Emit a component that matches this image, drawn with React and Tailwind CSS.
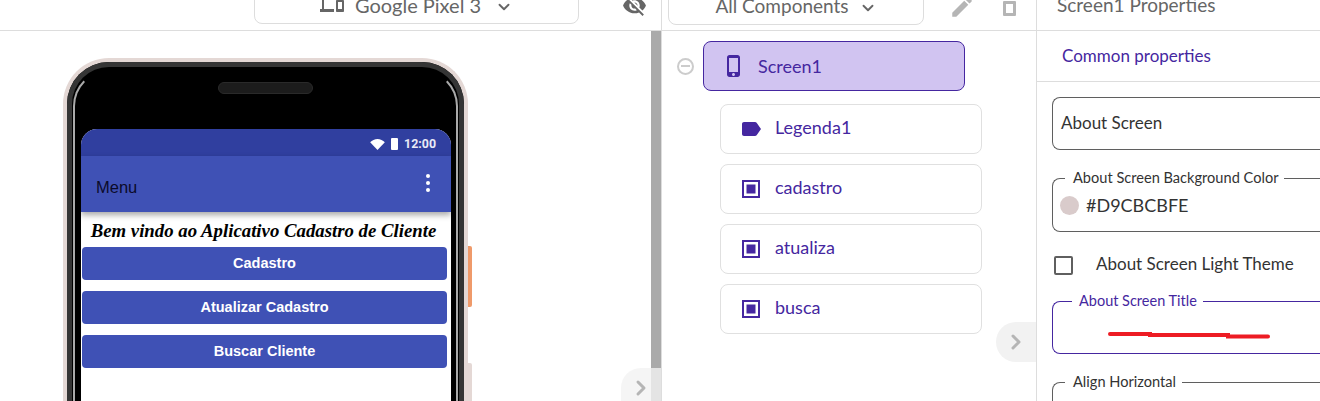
import { ChevronDown, ChevronRight } from "lucide-react";

const font = "font-['Lato','Noto_Sans',sans-serif]";

function Icon({ d, className }) {
  return (
    <svg viewBox="0 0 24 24" fill="currentColor" className={className}>
      <path d={d} />
    </svg>
  );
}

const icons = {
  devices:
    "M4 6h18V4H4c-1.1 0-2 .9-2 2v11H0v3h14v-3H4V6zm19 2h-6c-.55 0-1 .45-1 1v10c0 .55.45 1 1 1h6c.55 0 1-.45 1-1V9c0-.55-.45-1-1-1zm-1 9h-4v-7h4v7z",
  eyeOff:
    "M12 7c2.76 0 5 2.24 5 5 0 .65-.13 1.26-.36 1.83l2.92 2.92c1.51-1.26 2.7-2.89 3.43-4.75-1.73-4.39-6-7.5-11-7.5-1.4 0-2.74.25-3.98.7l2.16 2.16C10.74 7.13 11.35 7 12 7zM2 4.27l2.28 2.28.46.46C3.08 8.3 1.78 10.02 1 12c1.73 4.39 6 7.5 11 7.5 1.55 0 3.03-.3 4.38-.84l.42.42L19.73 22 21 20.73 3.27 3 2 4.27zM7.53 9.8l1.55 1.55c-.05.21-.08.43-.08.65 0 1.66 1.34 3 3 3 .22 0 .44-.03.65-.08l1.55 1.55c-.67.33-1.41.53-2.2.53-2.76 0-5-2.24-5-5 0-.79.2-1.53.53-2.2zm4.31-.78l3.15 3.15.02-.16c0-1.66-1.34-3-3-3l-.17.01z",
  pencil:
    "M3 17.25V21h3.75L17.81 9.94l-3.75-3.75L3 17.25zM20.71 7.04c.39-.39.39-1.02 0-1.41l-2.34-2.34c-.39-.39-1.02-.39-1.41 0l-1.83 1.83 3.75 3.75 1.83-1.83z",
  phone:
    "M15.5 1h-8C6.12 1 5 2.12 5 3.5v17C5 21.88 6.12 23 7.5 23h8c1.38 0 2.5-1.12 2.5-2.5v-17C18 2.12 16.88 1 15.5 1zm-4 21c-.83 0-1.5-.67-1.5-1.5s.67-1.5 1.5-1.5 1.5.67 1.5 1.5-.67 1.5-1.5 1.5zm4.5-4H7V4h9v14z",
  label:
    "M17.63 5.84C17.27 5.33 16.67 5 16 5L5 5.01C3.9 5.01 3 5.9 3 7v10c0 1.1.9 1.99 2 1.99L16 19c.67 0 1.27-.33 1.63-.84L22 12l-4.37-6.16z",
  button: "M3 3h18v18H3V3zm2 2v14h14V5H5zm2.5 2.5h9v9h-9v-9z",
};

function TreeRow({ icon, name, selected }) {
  return (
    <div
      className={
        selected
          ? "flex h-[50px] w-[262px] items-center rounded-lg border border-[#4527a0] bg-[#d1c4f1] pl-[18px] text-[#4527a0]"
          : "flex h-[50px] w-[262px] items-center rounded-lg border border-[#e0e0e0] bg-white pl-[18px] text-[#4527a0]"
      }
    >
      <Icon d={icon} className="h-6 w-6 shrink-0" />
      <span className={selected ? "ml-[12px] text-[18px] leading-none" : "mb-[5px] ml-[12px] text-[18px] leading-none"}>
        {name}
      </span>
    </div>
  );
}

function Field({ label, children, purple, height }) {
  return (
    <fieldset
      className={
        purple
          ? "m-0 w-[300px] rounded-l-lg border border-r-0 border-[#4527a0] pl-[19px]"
          : "m-0 w-[300px] rounded-l-lg border border-r-0 border-[#5f5f5f] pl-[12px]"
      }
      style={{ height }}
    >
      <legend
        className={
          purple
            ? "pl-[7px] pr-[6px] text-[14.5px] leading-[9px] text-[#4527a0]"
            : "pl-[8px] pr-[6px] text-[14.6px] leading-[9px] text-[#333333]"
        }
      >
        <span className="block -translate-y-px">{label}</span>
      </legend>
      {children}
    </fieldset>
  );
}

function Phone() {
  return (
    <div className="ml-[63px] mt-[27px] h-[400px] w-[405px] rounded-t-[46px] border-x-4 border-t-4 border-[#e4d8d5] bg-black">
      <div className="h-[400px] rounded-t-[42px] border-x-[5px] border-t-[5px] border-[#353535] px-[1px] pt-[3px]">
        <div className="h-[400px] rounded-t-[36px] border-x-2 border-t-2 border-x-[#aaaaaa] border-t-transparent pl-[6px] pr-[5px] pt-[10px]">
          <div className="mx-auto h-[12px] w-[95px] translate-x-[-1px] rounded-full border border-[#2a2a2a] bg-[#1c1c1c]" />
          <div className="mt-[35px] h-[300px] overflow-hidden rounded-t-[16px] bg-white">
            <div className="flex h-[27px] items-center justify-end bg-[#303f9f] pr-[15px] pt-[3px]">
              <svg viewBox="0 0 16 12" className="h-[11px] w-[15px] fill-white">
                <path d="M0 3.5C2 1.5 5 0 8 0s6 1.5 8 3.5L8 12z" />
              </svg>
              <div className="ml-[6px] h-[12px] w-[7px] rounded-[1px] bg-white" />
              <span className="ml-[6px] font-['Roboto',sans-serif] text-[12.4px] font-bold text-[#e8eaf6]">12:00</span>
            </div>
            <div className="relative z-10 flex h-[56px] items-center justify-between bg-[#3f51b5] pl-[15px] pr-[21px] shadow-[0_3px_6px_rgba(0,0,0,0.35)]">
              <span className="mt-[7px] font-['Liberation_Sans',sans-serif] text-[16.5px] text-[#0b0b2a]">Menu</span>
              <div className="mb-[3px] flex flex-col gap-[3px]">
                <div className="h-[4px] w-[4px] rounded-full bg-white" />
                <div className="h-[4px] w-[4px] rounded-full bg-white" />
                <div className="h-[4px] w-[4px] rounded-full bg-white" />
              </div>
            </div>
            <div className="w-[365px] pt-[7px] text-center font-['Liberation_Serif',serif] text-[18.8px] font-bold italic leading-[24px] text-black">
              Bem vindo ao Aplicativo Cadastro de Cliente
            </div>
            <div className="ml-[1px] mt-[4px] flex w-[365px] flex-col gap-[11px] font-['Liberation_Sans',sans-serif] text-[14.5px] font-bold text-white">
              <div className="flex h-[33px] items-center justify-center rounded-[4px] bg-[#3f51b5]">Cadastro</div>
              <div className="flex h-[33px] items-center justify-center rounded-[4px] bg-[#3f51b5]">Atualizar Cadastro</div>
              <div className="flex h-[33px] items-center justify-center rounded-[4px] bg-[#3f51b5]">Buscar Cliente</div>
            </div>
          </div>
        </div>
      </div>
    </div>
  );
}

export default function App() {
  return (
    <div className={`${font} relative flex h-[401px] w-[1320px] flex-col overflow-hidden bg-white`}>
      {/* Top toolbar, cut off by the top of the window */}
      <div className="flex h-[31px] shrink-0 border-b border-[#dddddd]">
        <div className="relative w-[661px] shrink-0">
          <div className="absolute left-[254px] top-[-20px] flex h-[44px] w-[325px] items-end justify-center gap-[11px] rounded-b-lg border border-[#dddddd] pb-[6px] text-[20px] leading-[24px] text-[#666666]">
            <Icon d={icons.devices} className="mb-[1px] h-[24px] w-[24px]" />
            <span>Google Pixel 3</span>
            <ChevronDown className="mb-[1px] ml-[3px] h-[18px] w-[18px]" strokeWidth={2.5} />
          </div>
          <Icon d={icons.eyeOff} className="absolute left-[622px] top-[-7px] h-[25px] w-[25px] text-[#666666]" />
        </div>
        <div className="relative w-[375px] shrink-0 border-l border-[#dddddd]">
          <div className="absolute left-[6px] top-[-20px] flex h-[45px] w-[256px] items-end justify-center gap-[10px] rounded-b-lg border border-[#dddddd] pb-[6px] text-[19px] leading-[24px] text-[#666666]">
            <span>All Components</span>
            <ChevronDown className="mb-[1px] h-[18px] w-[18px]" strokeWidth={2.5} />
          </div>
          <Icon d={icons.pencil} className="absolute left-[287px] top-[-6px] h-[26px] w-[26px] text-[#b5b5b5]" />
          <div className="absolute left-[341px] top-[1px] h-[15px] w-[13px] rounded-[1px] border-[3px] border-[#b5b5b5]" />
        </div>
        <div className="flex-1 border-l border-[#dddddd] pl-[20px]">
          <div className="mt-[-7px] text-[19px] leading-[24px] text-[#666666]">Screen1 Properties</div>
        </div>
      </div>

      <div className="flex min-h-0 flex-1">
        {/* Viewer */}
        <div className="relative w-[651px] shrink-0 overflow-hidden">
          <Phone />
          <div className="absolute left-[468px] top-[215px] h-[61px] w-[4px] rounded-r-[2px] bg-[#ef9a6a]" />
          <div className="absolute left-[468px] top-[332px] h-[60px] w-[4px] rounded-r-[2px] bg-[#e4d8d5]" />
        </div>
        <div className="w-[10px] shrink-0 bg-[#aaaaaa]" />

        {/* Component tree */}
        <div className="relative w-[375px] shrink-0 border-l border-[#dddddd]">
          <div className="ml-[15px] mt-[10px] flex items-center">
            <div className="mr-[9px] flex h-[17px] w-[17px] items-center justify-center rounded-full border-2 border-[#cccccc]">
              <div className="h-[2px] w-[9px] bg-[#cccccc]" />
            </div>
            <TreeRow icon={icons.phone} name="Screen1" selected />
          </div>
          <div className="ml-[58px] mt-[13px] flex flex-col gap-[10px]">
            <TreeRow icon={icons.label} name="Legenda1" />
            <TreeRow icon={icons.button} name="cadastro" />
            <TreeRow icon={icons.button} name="atualiza" />
            <TreeRow icon={icons.button} name="busca" />
          </div>
          <div className="absolute right-0 top-[291px] flex h-[40px] w-[40px] items-center justify-center rounded-l-full bg-[#f2f2f2]">
            <ChevronRight className="h-[24px] w-[24px] text-[#b5b5b5]" strokeWidth={3} />
          </div>
        </div>

        {/* Properties */}
        <div className="flex-1 border-l border-[#dddddd]">
          <div className="flex h-[51px] items-center border-b border-[#dddddd] pl-[25px] text-[17px] text-[#4527a0]">
            Common properties
          </div>
          <div className="pl-[15px] pt-[15px]">
            <div className="flex h-[53px] w-[300px] items-center rounded-l-lg border border-r-0 border-[#5f5f5f] pb-[2px] pl-[8px] text-[17px] text-[#333333]">
              About Screen
            </div>
            <div className="mt-[24px]">
              <Field label="About Screen Background Color" height="58px">
                <div className="ml-[-5px] mt-[10px] flex items-center">
                  <div className="h-[19px] w-[19px] rounded-full bg-[#d9cbcb]" />
                  <span className="ml-[7px] text-[18px] leading-[24px] text-[#333333]">#D9CBCBFE</span>
                </div>
              </Field>
            </div>
            <div className="mt-[23px] flex h-[20px] items-center">
              <div className="ml-[2px] h-[19px] w-[19px] rounded-[2px] border-2 border-[#5f5f5f]" />
              <span className="mb-[2px] ml-[23px] text-[17px] text-[#333333]">About Screen Light Theme</span>
            </div>
            <div className="mt-[22px]">
              <Field label="About Screen Title" purple height="57px">
                <svg viewBox="0 0 162 8" className="ml-[36px] mt-[25px] block h-[8px] w-[162px]">
                  <path d="M2 3H42V4H120V5.5H160" stroke="#ed1c24" strokeWidth="4" strokeLinecap="round" fill="none" />
                </svg>
              </Field>
            </div>
            <div className="mt-[24px]">
              <Field label="Align Horizontal" height="56px" />
            </div>
          </div>
        </div>
      </div>

      {/* Collapse handle over the viewer's scrollbar */}
      <div className="absolute left-[621px] top-[368px] flex h-[33px] w-[40px] items-start justify-center overflow-hidden rounded-tl-[20px] bg-[#f2f2f2]/80 pt-[8px]">
        <ChevronRight className="h-[24px] w-[24px] text-[#b5b5b5]" strokeWidth={3} />
      </div>
    </div>
  );
}
